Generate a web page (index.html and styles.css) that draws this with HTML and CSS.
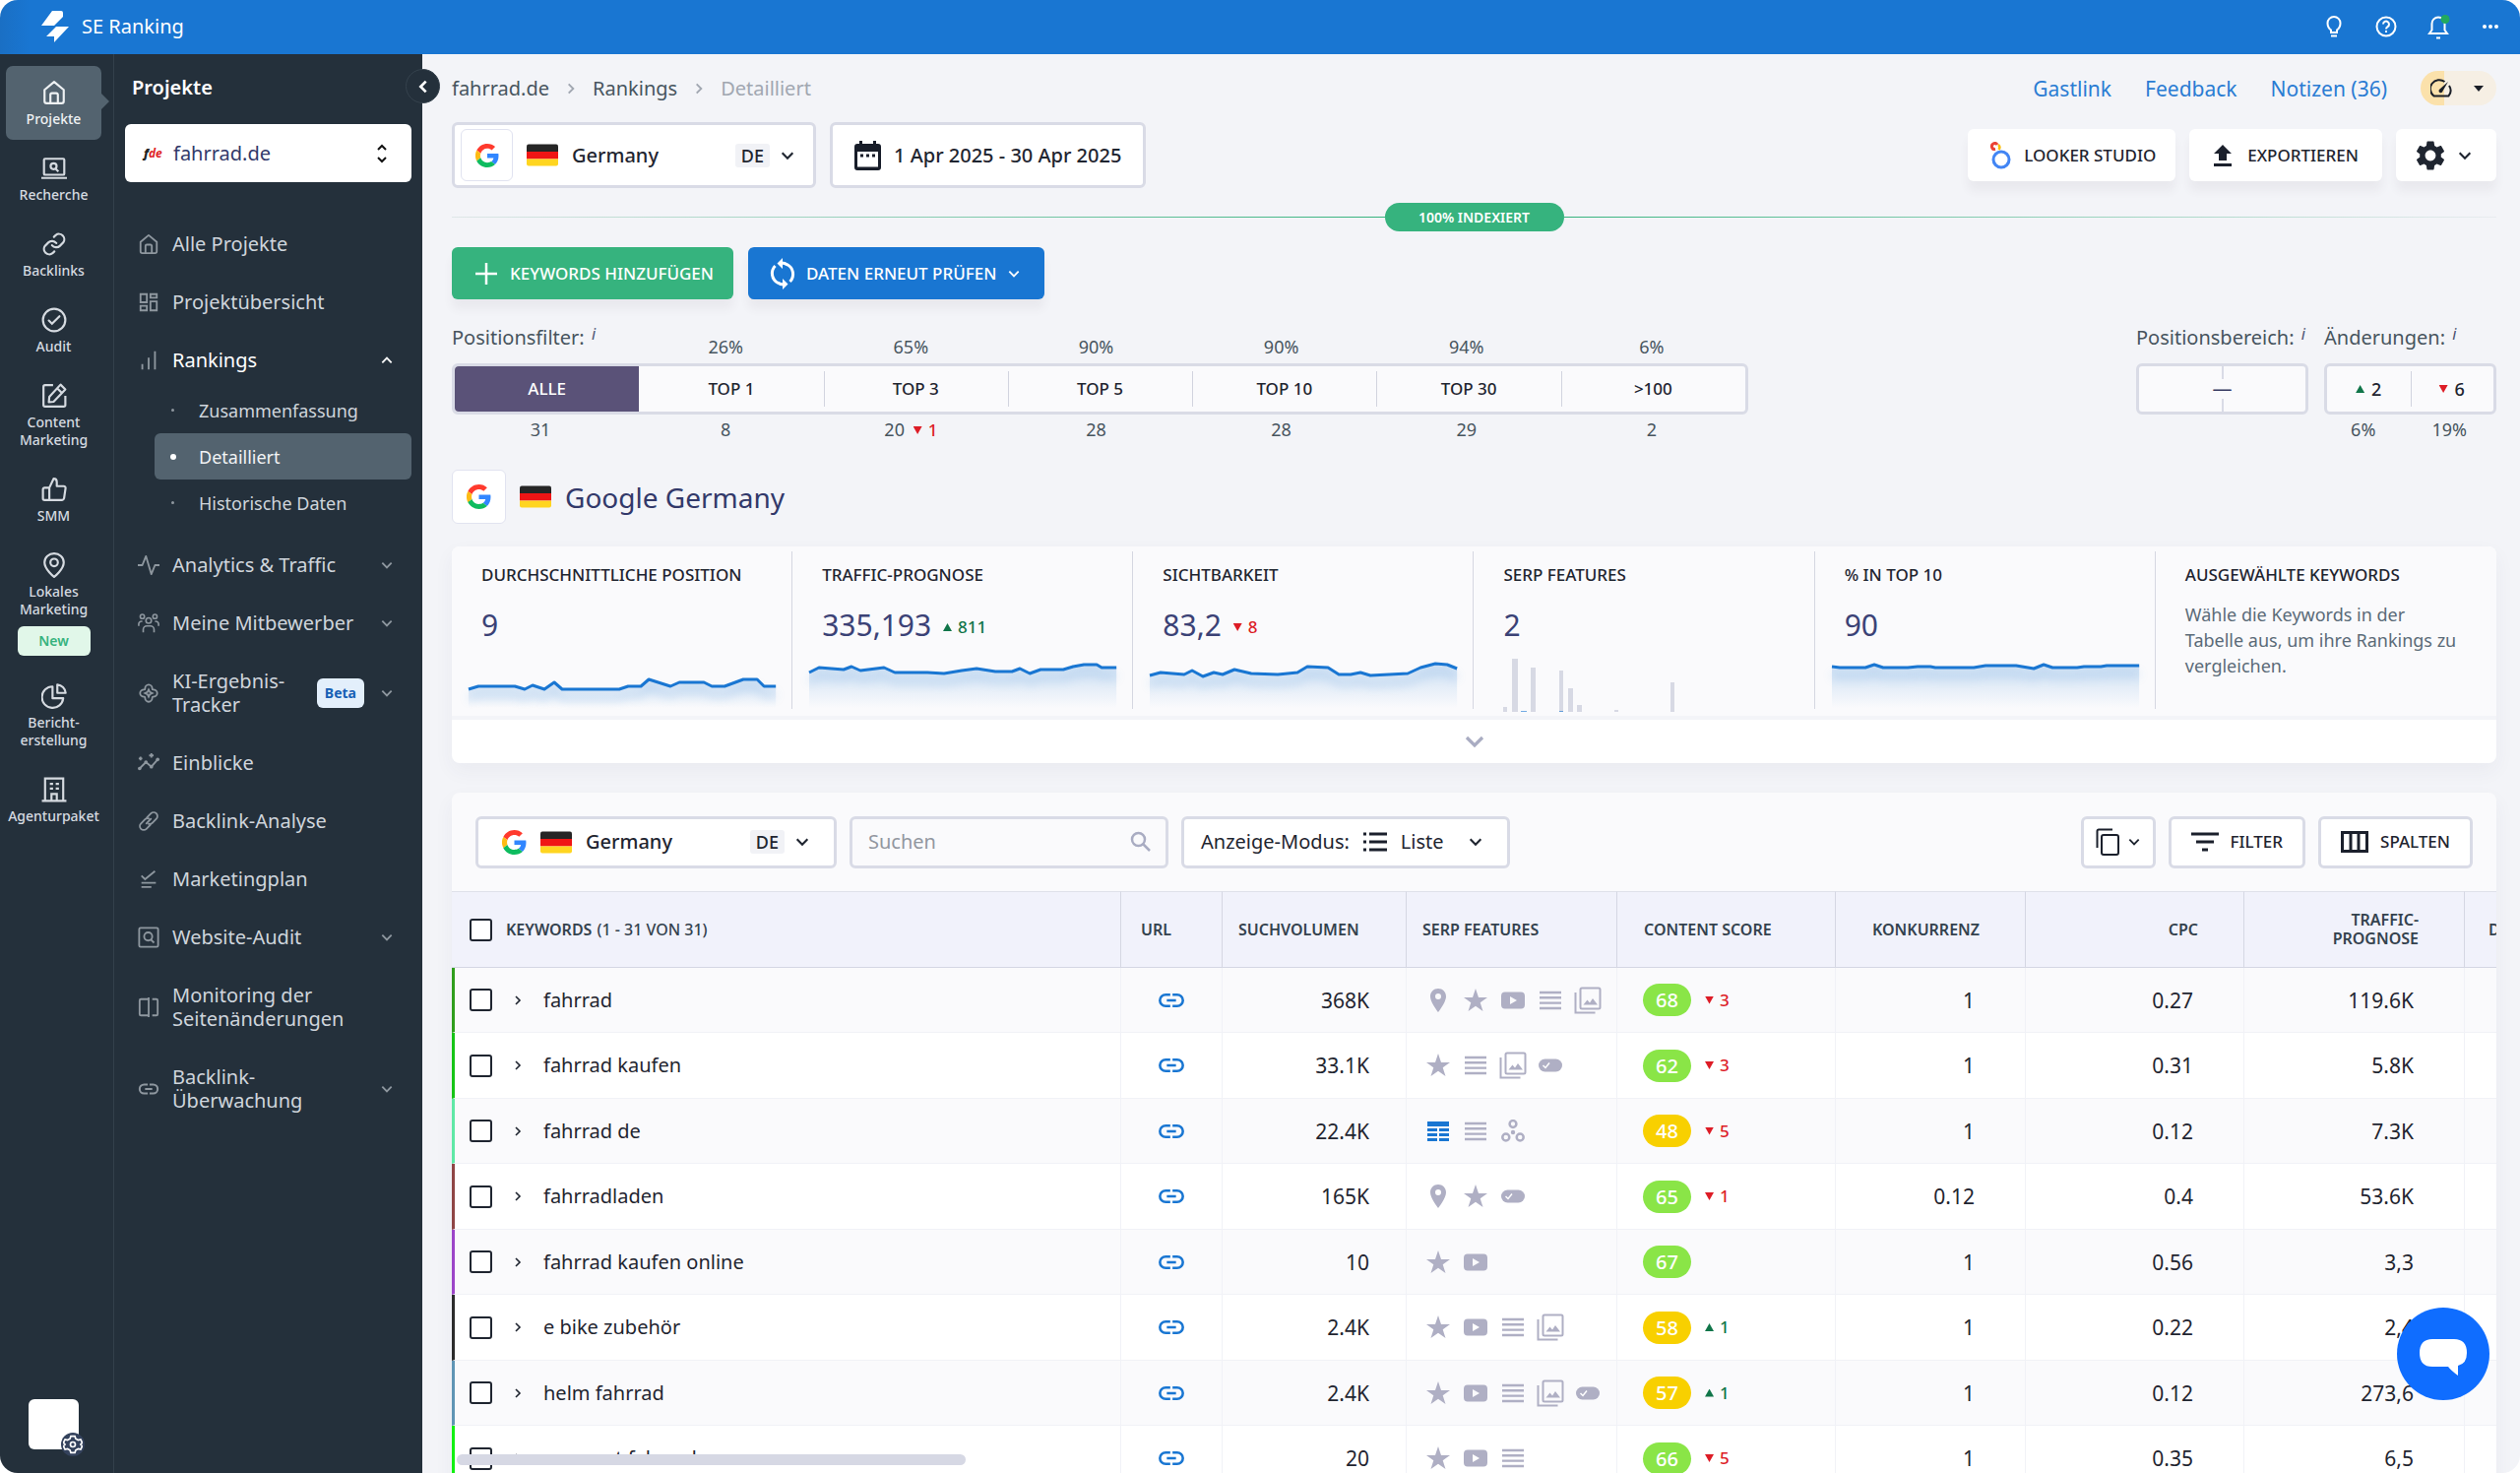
FILE: index.html
```html
<!DOCTYPE html>
<html lang="de">
<head>
  <meta charset="UTF-8">
  <meta name="viewport" content="width=device-width, initial-scale=1.0">
  <title>SE Ranking - Rankings</title>
  <link rel="stylesheet" href="styles.css">
</head>
<body>
  <svg class="sprite" aria-hidden="true">
    <symbol id="i-down" viewBox="0 0 12 12"><path d="M2 4l4 4 4-4" fill="none" stroke="currentColor" stroke-width="1.600"/></symbol>
    <symbol id="i-up" viewBox="0 0 12 12"><path d="M2 8l4-4 4 4" fill="none" stroke="currentColor" stroke-width="1.600"/></symbol>
    <symbol id="i-left" viewBox="0 0 12 12"><path d="M8 2L4 6l4 4" fill="none" stroke="currentColor" stroke-width="2"/></symbol>
    <symbol id="i-right" viewBox="0 0 12 12"><path d="M4 2l4 4-4 4" fill="none" stroke="currentColor" stroke-width="1.600"/></symbol>
    <symbol id="i-updown" viewBox="0 0 12 20"><path d="M2 6l4-4 4 4M2 14l4 4 4-4" fill="none" stroke="currentColor" stroke-width="2"/></symbol>
    <symbol id="i-home" viewBox="0 0 24 24"><path d="M3 9.500L12 2l9 7.500V20a2 2 0 0 1-2 2H5a2 2 0 0 1-2-2zM8.500 22v-8a1.500 1.500 0 0 1 1.500-1.500h4a1.500 1.500 0 0 1 1.500 1.500v8" fill="none" stroke="currentColor" stroke-width="2" stroke-linejoin="round"/></symbol>
    <symbol id="i-laptop" viewBox="0 0 24 24"><g fill="none" stroke="currentColor" stroke-width="2"><rect x="2.500" y="3" width="19" height="15" rx="1"/><path d="M0 21h24M13 12l3 3"/><circle cx="11.500" cy="10" r="2.800"/></g></symbol>
    <symbol id="i-chain" viewBox="0 0 24 24"><g fill="none" stroke="currentColor" stroke-width="2" stroke-linecap="round"><path d="M10 13a5 5 0 0 0 7.500.5l3-3a5 5 0 0 0-7-7l-1.700 1.700"/><path d="M14 11a5 5 0 0 0-7.500-.5l-3 3a5 5 0 0 0 7 7l1.700-1.700"/></g></symbol>
    <symbol id="i-chain2" viewBox="0 0 24 24"><g fill="none" stroke="currentColor" stroke-width="2" stroke-linecap="round"><path d="M10 8l4.500-4.500a4 4 0 0 1 6 6L16 14a4 4 0 0 1-4 1"/><path d="M14 16l-4.500 4.500a4 4 0 0 1-6-6L8 10a4 4 0 0 1 4-1M9.500 14.500l5-5"/></g></symbol>
    <symbol id="i-check" viewBox="0 0 24 24"><g fill="none" stroke="currentColor" stroke-width="2"><circle cx="12" cy="12" r="10.500"/><path d="M7 12.500l3 3 7-7" stroke-linecap="round"/></g></symbol>
    <symbol id="i-edit" viewBox="0 0 24 24"><g fill="none" stroke="currentColor" stroke-width="2" stroke-linejoin="round"><path d="M11 2H3.500A1.500 1.500 0 0 0 2 3.500v17A1.500 1.500 0 0 0 3.500 22H21a1.500 1.500 0 0 0 1.500-1.500V12"/><path d="M18 1.500l4.500 4.500L11.500 17.500 7 18l.5-5zM15 5l4 4"/></g></symbol>
    <symbol id="i-thumb" viewBox="0 0 24 24"><path d="M7.500 22H3a1.500 1.500 0 0 1-1.500-1.500V12A1.500 1.500 0 0 1 3 10.500h4.500zm0-11.500L11.500 2c2 0 3 1.300 3 3v4H21a1.800 1.800 0 0 1 1.700 2l-1.400 9.400A2 2 0 0 1 19.500 22h-12" fill="none" stroke="currentColor" stroke-width="2" stroke-linejoin="round"/></symbol>
    <symbol id="i-marker" viewBox="0 0 24 24"><g fill="none" stroke="currentColor" stroke-width="2"><path d="M12 23s-9-7-9-13.500a9 8.500 0 0 1 18 0C21 16 12 23 12 23z"/><circle cx="12" cy="9.500" r="3.500"/></g></symbol>
    <symbol id="i-pie" viewBox="0 0 24 24"><g fill="none" stroke="currentColor" stroke-width="2" stroke-linejoin="round"><path d="M10.500 3a10 10 0 1 0 10 11h-10z"/><path d="M15 1.200A8.500 8.500 0 0 1 22.800 9H15z"/></g></symbol>
    <symbol id="i-building" viewBox="0 0 24 24"><g fill="none" stroke="currentColor" stroke-width="2"><path d="M3.500 22V1.500h17V22M0.500 22.500h23M9.500 22v-6h5v6"/><path d="M8 6.500h3M13.500 6.500h3M8 11h3M13.500 11h3"/></g></symbol>
    <symbol id="i-dash" viewBox="0 0 24 24"><path d="M3 3h7v9H3zM14 3h7v4h-7zM14 11h7v10h-7zM3 16h7v5H3z" fill="none" stroke="currentColor" stroke-width="2"/></symbol>
    <symbol id="i-bars" viewBox="0 0 24 24"><path d="M5 22v-6M12 22V9M19 22V2" stroke="currentColor" stroke-width="2"/></symbol>
    <symbol id="i-pulse" viewBox="0 0 24 24"><path d="M0 12h5L9 2l6 20 4-10h5" fill="none" stroke="currentColor" stroke-width="2" stroke-linejoin="round"/></symbol>
    <symbol id="i-people" viewBox="0 0 24 24"><g fill="none" stroke="currentColor" stroke-width="1.800"><circle cx="12" cy="9" r="3"/><circle cx="5" cy="4.500" r="2.300"/><circle cx="19" cy="4.500" r="2.300"/><path d="M6 22v-3a4 4 0 0 1 4-4h4a4 4 0 0 1 4 4v3M1 15v-2a3 3 0 0 1 4-3M23 15v-2a3 3 0 0 0-4-3"/></g></symbol>
    <symbol id="i-flower" viewBox="0 0 24 24"><g fill="none" stroke="currentColor" stroke-width="2"><path d="M8 7a4 4.500 0 0 1 8 0 1 1 0 0 0 1 1 4.500 4 0 0 1 0 8 1 1 0 0 0-1 1 4 4.500 0 0 1-8 0 1 1 0 0 0-1-1 4.500 4 0 0 1 0-8 1 1 0 0 0 1-1z"/><path d="M12 8l1.300 2.700L16 12l-2.700 1.300L12 16l-1.300-2.700L8 12l2.700-1.300z"/></g></symbol>
    <symbol id="i-insight" viewBox="0 0 24 24"><g fill="none" stroke="currentColor" stroke-width="2"><path d="M2 18l7-7 6 5 7-8M15 1v5M12.500 3.500h5M3 5v4M1 7h4"/></g><g fill="currentColor"><circle cx="2" cy="18" r="2"/><circle cx="9" cy="11" r="2"/><circle cx="15" cy="16" r="2"/><circle cx="22" cy="8" r="2"/></g></symbol>
    <symbol id="i-plan" viewBox="0 0 24 24"><path d="M4 8l4 4L19 3M4 16h16M4 20.500h11" fill="none" stroke="currentColor" stroke-width="2"/></symbol>
    <symbol id="i-audit" viewBox="0 0 24 24"><g fill="none" stroke="currentColor" stroke-width="2"><rect x="1.500" y="1.500" width="21" height="21" rx="1.500"/><circle cx="11.500" cy="11" r="4.500"/><path d="M14 14l4 4"/></g></symbol>
    <symbol id="i-compare" viewBox="0 0 24 24"><path d="M12 1v22M12 3H3.500A1.500 1.500 0 0 0 2 4.500v15A1.500 1.500 0 0 0 3.500 21H12M16 3h4.500A1.500 1.500 0 0 1 22 4.500v15a1.500 1.500 0 0 1-1.500 1.500H16" fill="none" stroke="currentColor" stroke-width="2"/></symbol>
    <symbol id="i-link" viewBox="0 0 24 24"><path d="M11 7H7a5 5 0 0 0 0 10h4M13 7h4a5 5 0 0 1 0 10h-4M8 12h8" fill="none" stroke="currentColor" stroke-width="2.200"/></symbol>
    <symbol id="i-gear" viewBox="0 0 24 24"><path fill="currentColor" d="M19.140 12.940c.04-.3.060-.61.060-.94 0-.32-.02-.64-.07-.94l2.030-1.580c.18-.14.230-.41.120-.61l-1.920-3.320c-.12-.22-.37-.29-.59-.22l-2.390.96c-.5-.38-1.030-.7-1.620-.94l-.36-2.540c-.04-.24-.24-.41-.48-.41h-3.840c-.24 0-.43.170-.47.410l-.36 2.540c-.59.240-1.130.570-1.620.940l-2.390-.96c-.22-.08-.47 0-.59.220L2.740 8.870c-.12.210-.08.470.120.610l2.030 1.580c-.05.300-.09.630-.09.940s.020.640.070.940l-2.030 1.580c-.18.140-.23.410-.12.610l1.920 3.320c.12.220.37.290.59.220l2.390-.96c.5.380 1.030.7 1.620.940l.36 2.540c.05.240.24.410.48.410h3.840c.24 0 .44-.17.470-.41l.36-2.540c.59-.24 1.130-.56 1.620-.94l2.390.96c.22.080.47 0 .59-.22l1.920-3.320c.12-.22.070-.47-.12-.61zM12 15.600c-1.980 0-3.600-1.620-3.600-3.600s1.620-3.600 3.600-3.600 3.600 1.620 3.600 3.600-1.620 3.600-3.600 3.600z"/></symbol>
    <symbol id="i-google" viewBox="0 0 48 48"><path fill="#ff3a2d" d="M24 9.500c3.500 0 6.700 1.200 9.200 3.600l6.900-6.900C35.900 2.400 30.500 0 24 0 14.600 0 6.500 5.400 2.600 13.200l8 6.200C12.400 13.700 17.700 9.500 24 9.500z"/><path fill="#3186ff" d="M47 24.500c0-1.600-.2-3.100-.4-4.500H24v9h12.900c-.6 3-2.200 5.500-4.700 7.200l7.700 6C44.400 38 47 32 47 24.500z"/><path fill="#fdbb14" d="M10.500 28.600a14.500 14.500 0 0 1 0-9.200l-8-6.200a24 24 0 0 0 0 21.600z"/><path fill="#0ebc5f" d="M24 48c6.500 0 11.900-2.100 15.900-5.800l-7.700-6c-2.200 1.500-4.900 2.300-8.200 2.300-6.300 0-11.600-4.200-13.500-9.900l-8 6.200C6.500 42.600 14.600 48 24 48z"/></symbol>
    <symbol id="i-flag" viewBox="0 0 32 22"><path fill="#262626" d="M2 0h28a2 2 0 0 1 2 2v6H0V2a2 2 0 0 1 2-2z"/><path fill="#f01515" d="M0 7.500h32v7.500H0z"/><path fill="#ffd520" d="M0 15h32v5a2 2 0 0 1-2 2H2a2 2 0 0 1-2-2z"/></symbol>
    <symbol id="s-pin" viewBox="0 0 24 24"><path fill="currentColor" d="M12 0C7.500 0 4 3.500 4 8c0 6 8 16 8 16s8-10 8-16c0-4.500-3.500-8-8-8zm0 11a3 3 0 1 1 0-6 3 3 0 0 1 0 6z"/></symbol>
    <symbol id="s-star" viewBox="0 0 24 24"><path fill="currentColor" d="M12 0l3 9h9l-7.300 5.300L19.500 23 12 17.700 4.500 23l2.800-8.700L0 9h9z"/></symbol>
    <symbol id="s-video" viewBox="0 0 24 24"><path fill="currentColor" fill-rule="evenodd" d="M4 3.500h16a4 4 0 0 1 4 4v9a4 4 0 0 1-4 4H4a4 4 0 0 1-4-4v-9a4 4 0 0 1 4-4zM9 8v8l7-4z"/></symbol>
    <symbol id="s-lines" viewBox="0 0 24 24"><path d="M1 4h22M1 9.300h22M1 14.600h22M1 20h22" stroke="currentColor" stroke-width="2.400"/></symbol>
    <symbol id="s-image" viewBox="0 0 28 28"><g fill="none" stroke="currentColor" stroke-width="2"><rect x="6.500" y="1.500" width="20" height="21" rx="1.500"/><path d="M1.500 6v20.500h20"/></g><path fill="currentColor" d="M9.500 18.500l4-5 2.500 3 3-4.500 5 6.500z"/></symbol>
    <symbol id="s-tag" viewBox="0 0 24 24"><rect x="0" y="5.500" width="24" height="13" rx="6.500" fill="currentColor"/><path d="M4.500 12l2.500 2.500 4-5" fill="none" stroke="#fff" stroke-width="1.500"/></symbol>
    <symbol id="s-table" viewBox="0 0 24 24"><path fill="#1976d2" d="M1 2h22v5H1zM1 9h10v3H1zM13 9h10v3H13zM1 14h10v3H1zM13 14h10v3H13zM1 19h10v3H1zM13 19h10v3H13z"/></symbol>
    <symbol id="s-group" viewBox="0 0 24 24"><g fill="none" stroke="currentColor" stroke-width="2.500"><circle cx="12" cy="4.500" r="3.400"/><circle cx="4.800" cy="18" r="3.500"/><circle cx="19.200" cy="18" r="3.500"/></g><circle cx="12" cy="13" r="2.200" fill="currentColor"/></symbol>
    <linearGradient id="fade" x1="0" y1="0" x2="0" y2="1"><stop offset="0" stop-color="#1976d2" stop-opacity=".2"/><stop offset="1" stop-color="#1976d2" stop-opacity="0"/></linearGradient>
  </svg>

  <div class="app">
    <header class="topbar">
      <a class="brand" href="#">
        <svg width="30" height="34" viewBox="0 0 30 34"><path fill="#fff" d="M12 1h9q2 0 2 2v4L14 16H1zM16 17h13L14 33v-6H6z"/></svg>
        SE Ranking
      </a>
      <nav class="top-icons">
        <button aria-label="Tipps"><svg width="24" height="24" viewBox="0 0 24 24"><path d="M9 18v-2.500C7 14 5.500 11.500 5.500 8.500a6.500 6.500 0 0 1 13 0c0 3-1.500 5.500-3.500 7V18zM9 21.500h6" fill="none" stroke="#fff" stroke-width="2"/></svg></button>
        <button aria-label="Hilfe"><svg width="24" height="24" viewBox="0 0 24 24"><g fill="none" stroke="#fff" stroke-width="2"><circle cx="12" cy="12" r="9.500"/><path d="M9 9.500a3 3 0 1 1 4.500 2.700c-1 .6-1.500 1-1.500 2.300M12 16v2"/></g></svg></button>
        <button aria-label="Benachrichtigungen"><svg width="24" height="28" viewBox="0 0 24 28"><path d="M3 21h18l-2.500-3.500V11a6.500 6.500 0 0 0-13 0v6.500zM10 25.500h4" fill="none" stroke="#fff" stroke-width="2"/><circle cx="19" cy="6.500" r="4.500" fill="#22a95e"/></svg></button>
        <button aria-label="Mehr"><svg width="24" height="24" viewBox="0 0 24 24" fill="#fff"><circle cx="6" cy="12" r="2"/><circle cx="12" cy="12" r="2"/><circle cx="18" cy="12" r="2"/></svg></button>
      </nav>
    </header>

    <div class="body">
      <nav class="rail">
        <a class="active" href="#"><svg><use href="#i-home"/></svg>Projekte</a>
        <a href="#"><svg><use href="#i-laptop"/></svg>Recherche</a>
        <a href="#"><svg><use href="#i-chain"/></svg>Backlinks</a>
        <a href="#"><svg><use href="#i-check"/></svg>Audit</a>
        <a href="#"><svg><use href="#i-edit"/></svg>Content<br>Marketing</a>
        <a href="#"><svg><use href="#i-thumb"/></svg>SMM</a>
        <a href="#"><svg><use href="#i-marker"/></svg>Lokales<br>Marketing<span class="new">New</span></a>
        <a href="#"><svg><use href="#i-pie"/></svg>Bericht-<br>erstellung</a>
        <a href="#"><svg><use href="#i-building"/></svg>Agenturpaket</a>
        <button class="avatar" aria-label="Profil"><span><svg width="20" height="20" viewBox="0 0 24 24"><g fill="none" stroke="#fff" stroke-width="2"><path d="M9.500 2h5l1 3 3 1.700 3-.7 2 4-2 2 2 2-2 4-3-.7-3 1.700-1 3h-5l-1-3-3-1.700-3 .7-2-4 2-2-2-2 2-4 3 .7 3-1.700z"/><circle cx="12" cy="12" r="3"/></g></svg></span></button>
      </nav>

      <aside class="sidebar">
        <h2>Projekte</h2>
        <button class="collapse" aria-label="Menü einklappen"><svg width="16" height="16"><use href="#i-left"/></svg></button>
        <label class="project">
          <span class="fde"><b>f</b>de</span>
          <select aria-label="Projekt"><option>fahrrad.de</option></select>
          <svg width="12" height="20"><use href="#i-updown"/></svg>
        </label>
        <ul class="menu">
          <li><a href="#"><svg class="ico"><use href="#i-home"/></svg><span>Alle Projekte</span></a></li>
          <li><a href="#"><svg class="ico"><use href="#i-dash"/></svg><span>Projektübersicht</span></a></li>
          <li class="open">
            <a href="#"><svg class="ico"><use href="#i-bars"/></svg><span>Rankings</span><svg class="arr"><use href="#i-up"/></svg></a>
            <ul class="submenu">
              <li><a href="#">Zusammenfassung</a></li>
              <li><a class="active" href="#">Detailliert</a></li>
              <li><a href="#">Historische Daten</a></li>
            </ul>
          </li>
          <li><a href="#"><svg class="ico"><use href="#i-pulse"/></svg><span>Analytics &amp; Traffic</span><svg class="arr"><use href="#i-down"/></svg></a></li>
          <li><a href="#"><svg class="ico"><use href="#i-people"/></svg><span>Meine Mitbewerber</span><svg class="arr"><use href="#i-down"/></svg></a></li>
          <li><a href="#"><svg class="ico"><use href="#i-flower"/></svg><span>KI-Ergebnis-<br>Tracker</span><em>Beta</em><svg class="arr"><use href="#i-down"/></svg></a></li>
          <li><a href="#"><svg class="ico"><use href="#i-insight"/></svg><span>Einblicke</span></a></li>
          <li><a href="#"><svg class="ico"><use href="#i-chain2"/></svg><span>Backlink-Analyse</span></a></li>
          <li><a href="#"><svg class="ico"><use href="#i-plan"/></svg><span>Marketingplan</span></a></li>
          <li><a href="#"><svg class="ico"><use href="#i-audit"/></svg><span>Website-Audit</span><svg class="arr"><use href="#i-down"/></svg></a></li>
          <li><a href="#"><svg class="ico"><use href="#i-compare"/></svg><span>Monitoring der<br>Seitenänderungen</span></a></li>
          <li><a href="#"><svg class="ico"><use href="#i-link"/></svg><span>Backlink-<br>Überwachung</span><svg class="arr"><use href="#i-down"/></svg></a></li>
        </ul>
      </aside>

      <main class="main">
        <div class="row crumbs">
          <nav>
            <a href="#">fahrrad.de</a><svg width="14" height="14"><use href="#i-right"/></svg>
            <a href="#">Rankings</a><svg width="14" height="14"><use href="#i-right"/></svg>
            <span>Detailliert</span>
          </nav>
          <div class="links">
            <a href="#">Gastlink</a>
            <a href="#">Feedback</a>
            <a href="#">Notizen (36)</a>
            <button class="gauge" aria-label="Limits">
              <svg width="22" height="20" viewBox="0 0 22 20"><path d="M14.500 3A9 9 0 0 0 3.500 17.500h15A9 9 0 0 0 19 7" fill="none" stroke="#1b1f28" stroke-width="2"/><path d="M18 3l-5.500 9.500a2 2 0 1 1-3-2z" fill="#1b1f28"/></svg>
              <svg width="10" height="6" viewBox="0 0 10 6"><path d="M0 0h10L5 6z" fill="#1b1f28"/></svg>
            </button>
          </div>
        </div>

        <div class="row heads">
          <div class="group">
            <label class="picker picker-lg">
              <span class="tile tile-sm"><svg width="24" height="24"><use href="#i-google"/></svg></span>
              <svg width="32" height="23"><use href="#i-flag"/></svg>
              <select aria-label="Suchmaschine"><option>Germany</option></select>
              <span class="code">DE</span>
              <svg width="16" height="16"><use href="#i-down"/></svg>
            </label>
            <button class="box date">
              <svg width="27" height="30" viewBox="0 0 27 30"><path fill="#181d29" fill-rule="evenodd" d="M5 0h3v3h11V0h3v3h2a3 3 0 0 1 3 3v21a3 3 0 0 1-3 3H3a3 3 0 0 1-3-3V6a3 3 0 0 1 3-3h2zM3 11v15.500h21V11zM6 13.500h3v3H6zM12 13.500h3v3h-3zM18 13.500h3v3h-3z"/></svg>
              1 Apr 2025 - 30 Apr 2025
            </button>
          </div>
          <div class="group">
            <button class="card-btn looker"><svg width="22" height="28" viewBox="0 0 22 28"><g fill="none"><circle cx="12" cy="18" r="8" stroke="#4285f4" stroke-width="3"/><path d="M6 7.500A3 3 0 1 1 8 3" stroke="#ea4335" stroke-width="3"/><path d="M9 3q2.500 2 .5 5" stroke="#fbbc04" stroke-width="2.500"/></g></svg>LOOKER STUDIO</button>
            <button class="card-btn"><svg width="20" height="24" viewBox="0 0 20 24"><path fill="#1b202c" d="M10 1l9 9h-5v7H6v-7H1zM1 20h18v3H1z"/></svg>EXPORTIEREN</button>
            <button class="card-btn settings" aria-label="Einstellungen"><svg width="36" height="36"><use href="#i-gear"/></svg><svg width="16" height="16"><use href="#i-down"/></svg></button>
          </div>
        </div>

        <div class="indexed"><span>100% INDEXIERT</span></div>

        <div class="group actions">
          <button class="btn green"><svg width="22" height="22" viewBox="0 0 22 22"><path d="M11 0v22M0 11h22" stroke="#fff" stroke-width="2.500"/></svg>KEYWORDS HINZUFÜGEN</button>
          <button class="btn blue"><svg width="26" height="32" viewBox="0 0 26 32"><path d="M8.500 25.500A11 11 0 0 1 5.500 8M17.500 6.500a11 11 0 0 1 3 17.500M12 5a11 11 0 0 1 6 2M14 27a11 11 0 0 1-6-2" fill="none" stroke="#fff" stroke-width="3"/><path fill="#fff" d="M13 0v11L7.500 5.500zM13 32V21l5.500 5.500z"/></svg>DATEN ERNEUT PRÜFEN<svg width="14" height="14"><use href="#i-down"/></svg></button>
        </div>

        <section class="filters">
          <div class="positions">
            <div class="seven above"><span class="title">Positionsfilter: <i>i</i></span><span>26%</span><span>65%</span><span>90%</span><span>90%</span><span>94%</span><span>6%</span></div>
            <div class="seven segments"><button class="on">ALLE</button><button>TOP 1</button><button>TOP 3</button><button>TOP 5</button><button>TOP 10</button><button>TOP 30</button><button>&gt;100</button></div>
            <div class="seven below"><span>31</span><span>8</span><span>20 <small class="down">1</small></span><span>28</span><span>28</span><span>29</span><span>2</span></div>
          </div>
          <div class="range">
            <span class="title">Positionsbereich: <i>i</i></span>
            <button class="range-box">—</button>
          </div>
          <div class="range">
            <span class="title">Änderungen: <i>i</i></span>
            <div class="two segments"><button class="up">2</button><button class="down">6</button></div>
            <div class="two below"><span>6%</span><span>19%</span></div>
          </div>
        </section>

        <h1><span class="tile"><svg width="25" height="25"><use href="#i-google"/></svg></span><svg width="32" height="23"><use href="#i-flag"/></svg>Google Germany</h1>

        <section class="stats">
          <div class="stat-row">
            <article><h3>DURCHSCHNITTLICHE POSITION</h3><p>9</p>
              <svg class="spark" viewBox="0 0 312 62" preserveAspectRatio="none" data-points="0,39 10,36 47,36 57,39 65,35 77,39 87,32 95,39 153,39 162,36 175,36 183,29 205,36 214,32 239,32 247,36 260,36 279,29 293,29 300,36 312,36"></svg></article>
            <article><h3>TRAFFIC-PROGNOSE</h3><p>335,193 <small class="up">811</small></p>
              <svg class="spark" viewBox="0 0 312 62" preserveAspectRatio="none" data-points="0,22 10,17 35,19 43,16 52,20 76,17 87,22 120,22 137,23 155,20 170,18 189,21 206,21 214,18 224,23 235,19 258,19 268,16 279,14 292,14 297,17 312,17"></svg></article>
            <article><h3>SICHTBARKEIT</h3><p>83,2 <small class="down">8</small></p>
              <svg class="spark" viewBox="0 0 312 62" preserveAspectRatio="none" data-points="0,25 11,22 35,24 43,20 54,26 65,22 74,24 86,19 103,23 130,24 150,22 160,16 181,17 192,24 204,24 214,22 224,25 262,23 275,17 290,13 302,14 312,18"></svg></article>
            <article><h3>SERP FEATURES</h3><p>2</p>
              <svg class="bars" width="190" height="62" viewBox="0 0 190 62"><path fill="#d7d9e4" d="M0 57h4v5H0zM9 8h6v54H9zM28 17h5v45h-5zM57 20h4v42h-4zM66 38h5v24h-5zM75 55h5v7h-5zM113 60h4v2h-4zM170 32h4v30h-4z"/><path fill="#1976d2" opacity=".6" d="M18 61h6v1h-6zM57 61h4v1h-4z"/></svg></article>
            <article><h3>% IN TOP 10</h3><p>90</p>
              <svg class="spark" viewBox="0 0 312 62" preserveAspectRatio="none" data-points="0,16 8,17 34,17 43,14 52,17 77,17 87,16 100,16 105,17 144,17 156,15 187,15 205,18 215,14 224,17 249,17 256,16 273,16 279,15 312,15"></svg></article>
            <article><h3>AUSGEWÄHLTE KEYWORDS</h3><div class="hint">Wähle die Keywords in der Tabelle aus, um ihre Rankings zu vergleichen.</div></article>
          </div>
          <button class="expand" aria-label="Diagramm anzeigen"><svg width="24" height="24"><use href="#i-down"/></svg></button>
        </section>

        <section class="table-card">
          <div class="toolbar">
            <label class="picker picker-sm">
              <svg width="25" height="25"><use href="#i-google"/></svg>
              <svg width="32" height="23"><use href="#i-flag"/></svg>
              <select aria-label="Land"><option>Germany</option></select>
              <span class="code">DE</span>
              <svg width="16" height="16"><use href="#i-down"/></svg>
            </label>
            <label class="search">
              <input type="text" placeholder="Suchen" aria-label="Suchen">
              <svg width="22" height="22" viewBox="0 0 22 22"><g fill="none" stroke="#a9acc2" stroke-width="2.500"><circle cx="8.500" cy="8.500" r="6.500"/><path d="M13 13l7 7"/></g></svg>
            </label>
            <label class="picker mode">
              Anzeige-Modus:
              <svg width="24" height="20" viewBox="0 0 24 20"><path d="M6 2h18M6 10h18M6 18h18M0 2h3M0 10h3M0 18h3" stroke="#1b202c" stroke-width="3"/></svg>
              <select><option>Liste</option></select>
              <svg width="16" height="16"><use href="#i-down"/></svg>
            </label>
            <div class="group tools">
              <button class="box copy" aria-label="Kopieren"><svg width="24" height="28" viewBox="0 0 24 28"><g fill="none" stroke="#1b202c" stroke-width="2"><rect x="6" y="7" width="17" height="20" rx="2"/><path d="M1.500 20V3a1.500 1.500 0 0 1 1.500-1.500h14"/></g></svg><svg width="14" height="14"><use href="#i-down"/></svg></button>
              <button class="box"><svg width="28" height="20" viewBox="0 0 28 20"><path d="M0 2h28M5 10h18M11 18h6" stroke="#1b202c" stroke-width="3"/></svg>FILTER</button>
              <button class="box"><svg width="28" height="22" viewBox="0 0 28 22"><path d="M1.500 1.500h25v19h-25zM10 1v20M18 1v20" fill="none" stroke="#1b202c" stroke-width="3"/></svg>SPALTEN</button>
            </div>
          </div>
          <div class="table-wrap">
            <table>
              <colgroup><col><col class="c-url"><col class="c-vol"><col class="c-serp"><col class="c-score"><col class="c-comp"><col class="c-cpc"><col class="c-traffic"><col class="c-date"></colgroup>
              <thead>
                <tr>
                  <th><div class="kw"><input type="checkbox" aria-label="Alle auswählen">KEYWORDS <span>(1 - 31 VON 31)</span></div></th>
                  <th class="url">URL</th>
                  <th class="vol">SUCHVOLUMEN</th>
                  <th class="serp">SERP FEATURES</th>
                  <th class="score">CONTENT SCORE</th>
                  <th class="num">KONKURRENZ</th>
                  <th class="num">CPC</th>
                  <th class="num">TRAFFIC-<br>PROGNOSE</th>
                  <th class="date-col">DATUM</th>
                </tr>
              </thead>
              <tbody id="rows"></tbody>
            </table>
          </div>
        </section>
      </main>
    </div>
    <div class="scroll"></div>
    <button class="chat" aria-label="Chat"><svg width="50" height="40" viewBox="0 0 50 40"><path fill="#fff" d="M14 1h22q13 0 13 14 0 11-9 13v10q-7-5-10-9H14Q1 29 1 15 1 1 14 1z"/></svg></button>
  </div>
  <script src="script.js"></script>
</body>
</html>
```

FILE: styles.css
```css
* {
  box-sizing: border-box;
}
body {
  margin: 0;
  background: #fff;
  font-family: "Noto Sans", "Open Sans", sans-serif;
  font-size: 20px;
  line-height: 26px;
  color: #1f2530;
}
a {
  color: inherit;
  text-decoration: none;
}
button, select, input {
  font: inherit;
  color: inherit;
  margin: 0;
  padding: 0;
  border: 0;
  background: none;
}
select {
  appearance: none;
  flex: 1;
  min-width: 0;
}
svg {
  flex: none;
  display: block;
}
ul {
  list-style: none;
  margin: 0;
  padding: 0;
}
.sprite {
  position: absolute;
  width: 0;
  height: 0;
}
.app {
  position: relative;
  height: 100vh;
  display: flex;
  flex-direction: column;
  overflow: hidden;
  border-radius: 18px;
  background: #f3f4f8;
}

/* top bar */
.topbar {
  flex: none;
  height: 55px;
  padding: 0 18px 2px 41px;
  display: flex;
  align-items: center;
  justify-content: space-between;
  color: #fff;
  background: linear-gradient(90deg, #1a6fc4, #1976d2 30px);
}
.brand {
  display: flex;
  align-items: center;
  gap: 12px;
}
.top-icons {
  display: flex;
  align-items: center;
  gap: 29px;
}
.body {
  flex: 1;
  min-height: 0;
  display: flex;
}

/* left rail */
.rail {
  flex: none;
  width: 116px;
  padding: 12px 6px 24px;
  display: flex;
  flex-direction: column;
  gap: 2px;
  background: #24303b;
  border-right: 1px solid #33404b;
  font-size: 14px;
  font-weight: 500;
  line-height: 18px;
  color: #d5dae0;
}
.rail a {
  width: 97px;
  padding: 14px 0 12px;
  text-align: center;
  border-radius: 7px;
  position: relative;
}
.rail a svg {
  width: 26px;
  height: 26px;
  margin: 0 auto 5px;
}
.rail .active {
  background: #53636f;
  color: #eef1f3;
}
.rail .active::after {
  content: "";
  position: absolute;
  left: 100%;
  top: 28px;
  border: 8px solid transparent;
  border-left-color: #53636f;
  border-right: 0;
}
.new {
  display: block;
  width: 74px;
  margin: 8px auto 0;
  line-height: 30px;
  border-radius: 6px;
  background: #e1f7e9;
  color: #36b37e;
  font-weight: 600;
}
.avatar {
  position: relative;
  width: 51px;
  height: 51px;
  margin: auto auto 0 23px;
  border-radius: 6px;
  background: #fff;
}
.avatar span {
  position: absolute;
  right: -6px;
  bottom: -7px;
  width: 24px;
  height: 24px;
  padding: 2px;
  border-radius: 50%;
  background: #34425c;
}

/* sidebar */
.sidebar {
  flex: none;
  width: 313px;
  position: relative;
  padding: 21px 11px 0;
  background: #24303b;
  color: #cfd5dc;
}
.sidebar h2 {
  margin: 0 7px;
  font-size: 20px;
  font-weight: 600;
  color: #fff;
}
.collapse {
  position: absolute;
  right: -18px;
  top: 15px;
  width: 35px;
  height: 35px;
  padding: 0 9px;
  border-radius: 50%;
  background: #24303b;
  border: 1px solid #35424d;
  color: #fff;
}
.project {
  display: flex;
  align-items: center;
  gap: 8px;
  height: 59px;
  margin-top: 24px;
  padding: 0 24px 0 19px;
  border-radius: 6px;
  background: #fff;
  color: #32396a;
}
.project svg {
  color: #111;
}
.fde {
  width: 22px;
  font-size: 12px;
  font-weight: 700;
  font-style: italic;
  color: #e01f26;
}
.fde b {
  color: #222;
}
.menu {
  margin-top: 34px;
}
.menu > li > a {
  display: flex;
  align-items: center;
  gap: 13px;
  padding: 17px 18px 18px 13px;
  line-height: 24px;
}
.menu span {
  flex: 1;
}
.ico {
  width: 22px;
  height: 22px;
  color: #8e979f;
}
.arr {
  width: 14px;
  height: 14px;
  color: #8e979f;
}
.open > a {
  color: #fff;
}
.open .arr {
  color: #fff;
}
.menu em {
  padding: 0 8px;
  margin-right: 3px;
  line-height: 30px;
  border-radius: 6px;
  background: #e3effb;
  color: #1660b5;
  font-size: 14px;
  font-style: normal;
  font-weight: 700;
}
.submenu {
  margin-top: -3px;
  padding: 0 0 11px 30px;
  font-size: 18px;
}
.submenu a {
  display: flex;
  align-items: center;
  height: 47px;
  border-radius: 6px;
}
.submenu a::before {
  content: "";
  width: 3px;
  height: 3px;
  margin: 0 25px 0 17px;
  border-radius: 50%;
  background: #8e979f;
}
.submenu .active {
  background: #53636f;
  color: #f1f3f5;
}
.submenu .active::before {
  width: 6px;
  height: 6px;
  margin: 0 23px 0 16px;
  background: #fff;
}

/* main */
.main {
  flex: 1;
  min-width: 0;
  padding: 17px 24px 0 30px;
  overflow: hidden;
}
.row {
  display: flex;
  align-items: center;
  justify-content: space-between;
}
.group {
  display: flex;
  align-items: center;
  gap: 14px;
}
.crumbs {
  height: 35px;
  color: #47545e;
}
.crumbs nav {
  display: flex;
  align-items: center;
  gap: 15px;
}
.crumbs svg, .crumbs nav span {
  color: #a1a7b1;
}
.links {
  display: flex;
  align-items: center;
  gap: 34px;
  font-size: 21px;
  color: #2a7cd3;
}
.gauge {
  width: 77px;
  height: 35px;
  padding: 0 13px 0 10px;
  display: flex;
  align-items: center;
  justify-content: space-between;
  border-radius: 18px;
  background: linear-gradient(90deg, #fbe1ab 24px, #f6efe4 24px);
}
.heads {
  margin-top: 17px;
}
.picker, .box {
  display: flex;
  align-items: center;
  background: #fff;
  border: 3px solid #d9dbe6;
  border-radius: 6px;
  font-weight: 500;
}
.picker {
  gap: 14px;
}
.picker-lg {
  width: 370px;
  height: 67px;
  padding: 0 18px 0 6px;
}
.tile {
  display: grid;
  place-items: center;
  width: 55px;
  height: 55px;
  border: 1px solid #e1e3f0;
  border-radius: 6px;
  background: #fff;
}
.tile-sm {
  width: 53px;
  height: 53px;
}
.code {
  padding: 0 6px;
  margin-right: -4px;
  line-height: 24px;
  background: #f1f2f6;
  border-radius: 3px;
  font-size: 18px;
}
.date {
  height: 67px;
  padding: 0 22px;
  gap: 13px;
}
.card-btn, .btn {
  display: flex;
  align-items: center;
  height: 53px;
  gap: 13px;
  border-radius: 6px;
  font-size: 17px;
  font-weight: 500;
  box-shadow: 0 10px 10px rgba(80, 60, 80, .06);
}
.card-btn {
  padding: 0 24px;
  gap: 15px;
  background: #fff;
}
.looker {
  padding: 0 20px 0 22px;
  gap: 13px;
}
.settings {
  padding: 0 24px 0 17px;
  gap: 9px;
}
.indexed {
  display: flex;
  align-items: center;
  margin: 15px 0 16px;
}
.indexed::before, .indexed::after {
  content: "";
  flex: 1;
  height: 1px;
  background: linear-gradient(90deg, #dfe7e8, #36b37e);
}
.indexed::after {
  background: linear-gradient(90deg, #36b37e, #e9ecf0);
}
.indexed span {
  width: 182px;
  line-height: 29px;
  text-align: center;
  border-radius: 15px;
  background: #36b37e;
  color: #fff;
  font-size: 14px;
  font-weight: 600;
}
.actions {
  gap: 15px;
}
.btn {
  color: #fff;
  padding: 0 20px 0 24px;
}
.green {
  background: #36b37e;
}
.blue {
  background: #1976d2;
  gap: 11px;
  padding: 0 24px 0 22px;
}

/* position filters */
.filters {
  display: flex;
  gap: 16px;
  margin-top: 26px;
}
.positions {
  flex: 0 1 1317px;
  margin-right: auto;
}
.seven {
  display: grid;
  grid-template-columns: repeat(7, 1fr);
}
.two {
  display: grid;
  grid-template-columns: repeat(2, 1fr);
}
.above {
  height: 39px;
  padding-bottom: 4px;
  align-items: end;
}
.above, .below {
  margin: 0 4px 0 -4px;
  text-align: center;
  font-size: 18px;
  color: #47545e;
}
.below {
  padding-top: 2px;
}
.title {
  font-size: 20px;
  color: #47545e;
  white-space: nowrap;
  text-align: left;
  align-self: start;
}
.above .title {
  padding-left: 4px;
}
.title i {
  font-size: 16px;
  margin-left: 2px;
  vertical-align: 5px;
  line-height: 10px;
  color: #4b5170;
}
.segments {
  height: 52px;
  border: 3px solid #d9dbe6;
  border-radius: 6px;
  background: #fafafc;
  font-size: 17px;
  font-weight: 500;
}
.segments button {
  position: relative;
}
.segments button + button::before {
  content: "";
  position: absolute;
  left: 0;
  top: 5px;
  bottom: 5px;
  width: 1px;
  background: #d2d4df;
}
.segments .on {
  background: #5a5278;
  color: #fff;
  border-radius: 4px 0 0 4px;
}
.segments .on + button::before {
  display: none;
}
small {
  margin-left: 4px;
  font-size: 17px;
  font-weight: 500;
}
small::before, .two button::after {
  content: "";
  display: inline-block;
  width: 9px;
  height: 8px;
  margin: 0 6px 2px 0;
  background: #dd1c26;
  clip-path: polygon(0 0, 100% 0, 50% 100%);
}
small.down {
  color: #dd1c26;
}
small.up {
  color: #107549;
}
small.up::before, .two .up::after {
  background: #107549;
  clip-path: polygon(50% 0, 100% 100%, 0 100%);
}
.two button {
  display: flex;
  align-items: center;
  justify-content: center;
  font-size: 18px;
}
.two button::after {
  order: -1;
  margin: 0 7px 0 0;
}
.range {
  width: 175px;
}
.range .title {
  display: block;
  height: 39px;
}
.range-box {
  width: 100%;
  height: 52px;
  border: 3px solid #d9dbe6;
  border-radius: 6px;
  color: #373c63;
  background: linear-gradient(#d9dbe6, #d9dbe6) 50% 0 / 2px 13px no-repeat,
    linear-gradient(#d9dbe6, #d9dbe6) 50% 100% / 2px 13px no-repeat, #fafafc;
}

h1 {
  display: flex;
  align-items: center;
  gap: 14px;
  margin: 27px 0 23px;
  font-size: 28px;
  font-weight: 400;
  color: #32396a;
}

/* stat cards */
.stats, .table-card {
  border-radius: 8px;
  background: #fff;
  box-shadow: 0 8px 20px rgba(60, 60, 90, .05);
}
.stat-row {
  display: grid;
  grid-template-columns: repeat(6, 1fr);
  padding: 5px 0 7px;
  background: #fafafc;
  border-bottom: 4px solid #f3f4f8;
  border-radius: 8px 8px 0 0;
}
.stat-row article {
  height: 160px;
  padding: 11px 16px 0 30px;
  border-right: 1px solid #d5d7e1;
}
.stat-row article:last-child {
  border: 0;
}
.stat-row h3 {
  margin: 0 -10px 0 0;
  font-size: 17px;
  font-weight: 500;
  white-space: nowrap;
}
.stat-row p {
  margin: 20px 0 8px;
  font-size: 30px;
  line-height: 36px;
  color: #3b4276;
}
.stat-row small {
  vertical-align: 3px;
  line-height: 20px;
}
.spark {
  width: calc(100% + 13px);
  height: 62px;
  margin-left: -13px;
  overflow: visible;
}
.spark polyline {
  fill: none;
  stroke: #1976d2;
  stroke-width: 3;
  stroke-linejoin: round;
  filter: drop-shadow(0 9px 5px rgba(25, 118, 210, .3));
}
.spark polygon {
  fill: url(#fade);
}
.hint {
  margin: 14px 20px 0 0;
  font-size: 18px;
  color: #5b6b78;
}
.expand {
  display: block;
  width: 100%;
  height: 44px;
  color: #a9acc2;
}
.expand svg {
  margin: 0 auto;
}

/* table */
.table-card {
  margin-top: 30px;
  background: #fafafc;
  overflow: hidden;
}
.toolbar {
  display: flex;
  align-items: center;
  gap: 13px;
  height: 100px;
  padding: 0 24px;
}
.picker-sm {
  width: 367px;
  height: 53px;
  padding: 0 24px;
}
.search {
  display: flex;
  align-items: center;
  width: 324px;
  height: 53px;
  padding: 0 14px 0 16px;
  border: 3px solid #d9dbe6;
  border-radius: 6px;
}
.search input {
  flex: 1;
  min-width: 0;
  outline: 0;
}
.search input::placeholder {
  color: #9297a0;
}
.mode {
  width: 334px;
  height: 53px;
  padding: 0 24px 0 17px;
  font-weight: 400;
}
.tools {
  margin-left: auto;
  gap: 13px;
}
.tools .box {
  height: 53px;
  padding: 0 20px;
  gap: 12px;
  font-size: 17px;
}
.tools .copy {
  padding: 0 12px;
  gap: 8px;
}
.table-wrap {
  overflow: hidden;
}
table {
  table-layout: fixed;
  width: calc(100% + 200px);
  border-collapse: separate;
  border-spacing: 0;
}
.c-url { width: 103px; }
.c-vol { width: 187px; }
.c-serp { width: 214px; }
.c-score { width: 222px; }
.c-comp { width: 193px; }
.c-cpc { width: 222px; }
.c-traffic { width: 224px; }
.c-date { width: 232px; }
th {
  height: 78px;
  padding: 0 24px;
  background: #f1f2fb;
  border-top: 1px solid #dfe1ea;
  border-bottom: 1px solid #d5d7e3;
  border-right: 1px solid #d5d7e3;
  font-size: 16px;
  line-height: 19px;
  font-weight: 600;
  color: #34424e;
  text-align: left;
}
th span {
  font-weight: 500;
}
th:first-child {
  padding-left: 18px;
}
th.url {
  padding: 0 20px;
}
th.vol, th.serp {
  padding: 0 0 0 16px;
}
th.score {
  padding: 0 0 0 27px;
}
th.num {
  padding: 0 46px 0 0;
  text-align: right;
}
td {
  height: 66px;
  padding: 0 14px;
  border-right: 1px solid #f1f2f7;
  border-bottom: 1px solid #f1f2f7;
}
tbody tr:nth-child(even) td {
  height: 67px;
  background: #fff;
}
td.num {
  padding-right: 51px;
  font-size: 21px;
  text-align: right;
}
td.vol {
  padding-right: 37px;
}
td:first-child {
  padding-left: 15px;
  border-left: 3px solid;
}
.kw {
  display: flex;
  align-items: center;
  gap: 14px;
}
.kw span {
  margin-left: -9px;
}
td .kw {
  gap: 20px;
}
input[type="checkbox"] {
  appearance: none;
  width: 23px;
  height: 23px;
  border: 2px solid #1f2530;
  border-radius: 3px;
  background: #fff;
}
.serps {
  display: flex;
  align-items: center;
  gap: 14px;
  padding-left: 6px;
  color: #afafc4;
}
.serps svg {
  width: 24px;
  height: 24px;
}
.serps svg.s-image {
  width: 28px;
  height: 28px;
  margin: 0 -2px;
}
.url-link svg {
  margin: 0 auto;
  color: #1976d2;
}
.score-cell {
  display: flex;
  align-items: center;
  gap: 10px;
  padding-left: 12px;
}
.score-cell b {
  width: 49px;
  line-height: 33px;
  border-radius: 17px;
  text-align: center;
  font-weight: 500;
  color: #fff;
  background: #8ae547;
}
.score-cell b.mid {
  background: #f8d000;
}

/* overlays */
.scroll {
  position: absolute;
  left: 464px;
  bottom: 8px;
  width: 517px;
  height: 11px;
  border-radius: 6px;
  background: #d6d8e4;
}
.chat {
  position: absolute;
  right: 31px;
  bottom: 74px;
  width: 94px;
  height: 94px;
  border-radius: 50%;
  background: #0f6dff;
}
.chat svg {
  margin: 8px auto 0;
}
```

FILE: script.js
```js
// keyword, row colour, volume, serp features, score, change, competition, cpc, traffic
const rows = [
  ["fahrrad", "#2f9e1c", "368K", "pin star video lines image", 68, -3, "1", "0.27", "119.6K"],
  ["fahrrad kaufen", "#16c416", "33.1K", "star lines image tag", 62, -3, "1", "0.31", "5.8K"],
  ["fahrrad de", "#5fe8a6", "22.4K", "table lines group", 48, -5, "1", "0.12", "7.3K"],
  ["fahrradladen", "#8f4545", "165K", "pin star tag", 65, -1, "0.12", "0.4", "53.6K"],
  ["fahrrad kaufen online", "#9c45c8", "10", "star video", 67, 0, "1", "0.56", "3,3"],
  ["e bike zubehör", "#2b2b2b", "2.4K", "star video lines image", 58, 1, "1", "0.22", "2,4"],
  ["helm fahrrad", "#5f95b5", "2.4K", "star video lines image tag", 57, 1, "1", "0.12", "273,6"],
  ["e-mount fahrrad", "#12f012", "20", "star video lines", 66, -5, "1", "0.35", "6,5"]
];

function change(n) {
  if (!n) return "";
  return `<small class="${n > 0 ? "up" : "down"}">${Math.abs(n)}</small>`;
}

document.getElementById("rows").innerHTML = rows.map(r => `
  <tr>
    <td style="border-left-color: ${r[1]}"><div class="kw"><input type="checkbox" aria-label="${r[0]}"><svg width="12" height="12"><use href="#i-right"/></svg>${r[0]}</div></td>
    <td><a class="url-link" href="#" aria-label="URL"><svg width="28" height="28"><use href="#i-link"/></svg></a></td>
    <td class="num vol">${r[2]}</td>
    <td><div class="serps">${r[3].split(" ").map(s => `<svg class="s-${s}"><use href="#s-${s}"/></svg>`).join("")}</div></td>
    <td><div class="score-cell"><b class="${r[4] < 60 ? "mid" : ""}">${r[4]}</b>${change(r[5])}</div></td>
    <td class="num">${r[6]}</td>
    <td class="num">${r[7]}</td>
    <td class="num">${r[8]}</td>
    <td></td>
  </tr>`).join("");

// sparklines: line plus faded area below it
document.querySelectorAll(".spark").forEach(svg => {
  const points = svg.dataset.points;
  svg.innerHTML = `<polygon points="0,58 ${points} 312,58"/><polyline points="${points}"/>`;
});
```
